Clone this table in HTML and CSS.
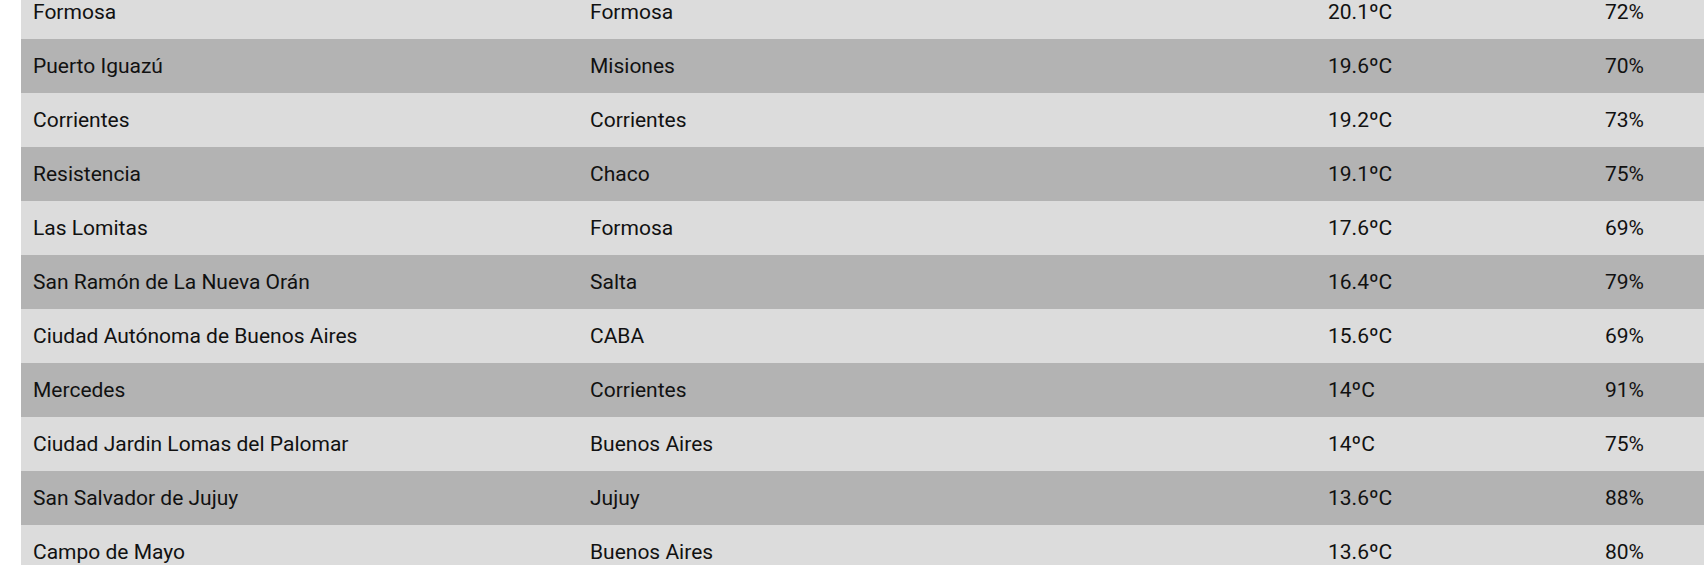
FILE: index.html
```html
<!DOCTYPE html>
<html lang="es">
<head>
<meta charset="utf-8">
<title>Temperaturas</title>
<link rel="stylesheet" href="styles.css">
</head>
<body>
<div class="wrap">
<table class="weather">
<colgroup>
<col class="c-city"><col class="c-prov"><col class="c-temp"><col class="c-hum">
</colgroup>
<tbody>
<tr><td>Formosa</td><td>Formosa</td><td>20.1ºC</td><td>72%</td></tr>
<tr><td>Puerto Iguazú</td><td>Misiones</td><td>19.6ºC</td><td>70%</td></tr>
<tr><td>Corrientes</td><td>Corrientes</td><td>19.2ºC</td><td>73%</td></tr>
<tr><td>Resistencia</td><td>Chaco</td><td>19.1ºC</td><td>75%</td></tr>
<tr><td>Las Lomitas</td><td>Formosa</td><td>17.6ºC</td><td>69%</td></tr>
<tr><td>San Ramón de La Nueva Orán</td><td>Salta</td><td>16.4ºC</td><td>79%</td></tr>
<tr><td>Ciudad Autónoma de Buenos Aires</td><td>CABA</td><td>15.6ºC</td><td>69%</td></tr>
<tr><td>Mercedes</td><td>Corrientes</td><td>14ºC</td><td>91%</td></tr>
<tr><td>Ciudad Jardin Lomas del Palomar</td><td>Buenos Aires</td><td>14ºC</td><td>75%</td></tr>
<tr><td>San Salvador de Jujuy</td><td>Jujuy</td><td>13.6ºC</td><td>88%</td></tr>
<tr><td>Campo de Mayo</td><td>Buenos Aires</td><td>13.6ºC</td><td>80%</td></tr>
</tbody>
</table>
</div>
</body>
</html>
```

FILE: styles.css
```css
html, body {
  margin: 0;
  padding: 0;
  background: #ffffff;
  overflow: hidden;
}
.wrap {
  margin-top: -15px;
  padding-left: 21px;
  width: 1740px;
}
.weather {
  width: 100%;
  border-collapse: collapse;
  table-layout: fixed;
  font-family: Roboto, "Liberation Sans", sans-serif;
  font-size: 21px;
  color: #111111;
}
.c-city { width: 557px; }
.c-prov { width: 738px; }
.c-temp { width: 277px; }
.weather td {
  height: 54px;
  padding: 0 12px;
  box-sizing: border-box;
  vertical-align: middle;
  white-space: nowrap;
}
.weather tr:nth-child(odd) { background: #dcdcdc; }
.weather tr:nth-child(even) { background: #b3b3b3; }
```
